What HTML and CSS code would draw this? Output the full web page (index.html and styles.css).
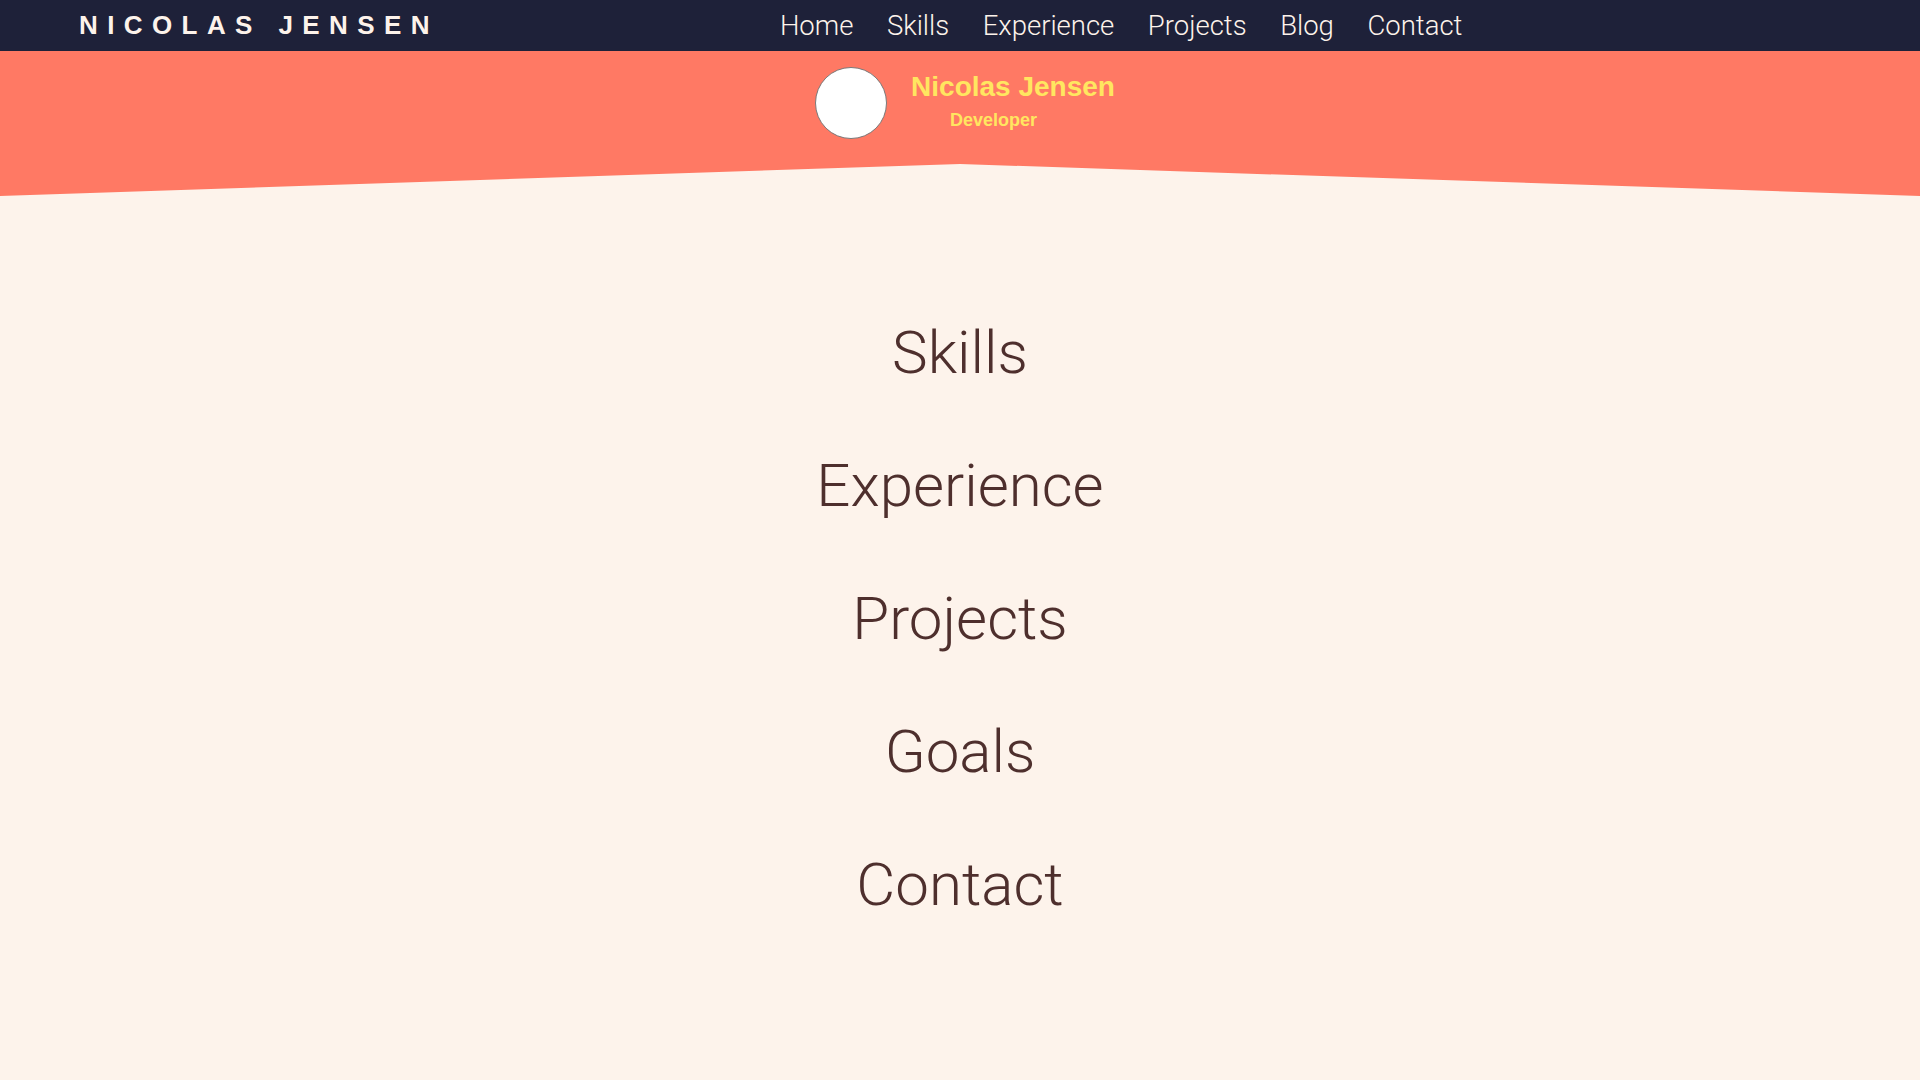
FILE: index.html
```html
<!DOCTYPE html>
<html lang="en">
<head>
<meta charset="utf-8">
<title>Nicolas Jensen</title>
<link rel="stylesheet" href="styles.css">
</head>
<body>
<nav class="topbar">
  <div class="logo">NICOLAS JENSEN</div>
  <ul class="menu">
    <li><a href="#">Home</a></li>
    <li><a href="#">Skills</a></li>
    <li><a href="#">Experience</a></li>
    <li><a href="#">Projects</a></li>
    <li><a href="#">Blog</a></li>
    <li><a href="#">Contact</a></li>
  </ul>
</nav>
<header class="hero">
  <div class="avatar"></div>
  <div class="identity">
    <div class="name">Nicolas Jensen</div>
    <div class="role">Developer</div>
  </div>
</header>
<main class="sections">
  <h2 class="section-title">Skills</h2>
  <h2 class="section-title">Experience</h2>
  <h2 class="section-title">Projects</h2>
  <h2 class="section-title">Goals</h2>
  <h2 class="section-title">Contact</h2>
</main>
</body>
</html>
```
FILE: styles.css
```css
* { box-sizing: border-box; }
html, body { margin: 0; padding: 0; }
body {
  background: #fdf3eb;
  font-family: "Liberation Sans", Arial, sans-serif;
  min-height: 1080px;
}
.topbar {
  height: 51px;
  background: #1e2139;
  display: flex;
  align-items: center;
  padding: 0 0 0 79px;
}
.logo {
  color: #fdf3eb;
  font-family: "Liberation Sans", Arial, sans-serif;
  font-weight: 700;
  font-size: 26px;
  letter-spacing: 9.4px;
  line-height: 30px;
  margin-top: -1px;
}
.menu {
  list-style: none;
  margin: 0 0 0 341px;
  padding: 0;
  display: flex;
  gap: 33.5px;
}
.menu a {
  color: #fdf3eb;
  text-decoration: none;
  font-family: Roboto, "Liberation Sans", sans-serif;
  font-weight: 300;
  font-size: 27.5px;
  line-height: 32px;
  display: block;
  margin-top: 0;
}
.hero {
  background: #ff7964;
  height: 145px;
  display: flex;
  justify-content: center;
  align-items: flex-start;
  padding: 16px 0 0 10px;
  gap: 24px;
  clip-path: polygon(0 0, 100% 0, 100% 100%, 50% calc(100% - 32px), 0 100%);
}
.avatar {
  width: 72px;
  height: 72px;
  border-radius: 50%;
  background: #ffffff;
  border: 1px solid #7a7a7a;
  flex: none;
}
.identity {
  margin-top: 4px;
  color: #ffe660;
  font-weight: 700;
}
.name {
  font-size: 28px;
  line-height: 32px;
}
.role {
  font-size: 18px;
  line-height: 21px;
  margin-top: 7px;
  padding-left: 39px;
}
.sections {
  display: flex;
  flex-direction: column;
  align-items: center;
  padding-top: 90px;
}
.section-title {
  margin: 0;
  font-family: Roboto, "Liberation Sans", sans-serif;
  font-weight: 300;
  font-size: 60px;
  line-height: 133px;
  color: #4e2f2d;
}
```
